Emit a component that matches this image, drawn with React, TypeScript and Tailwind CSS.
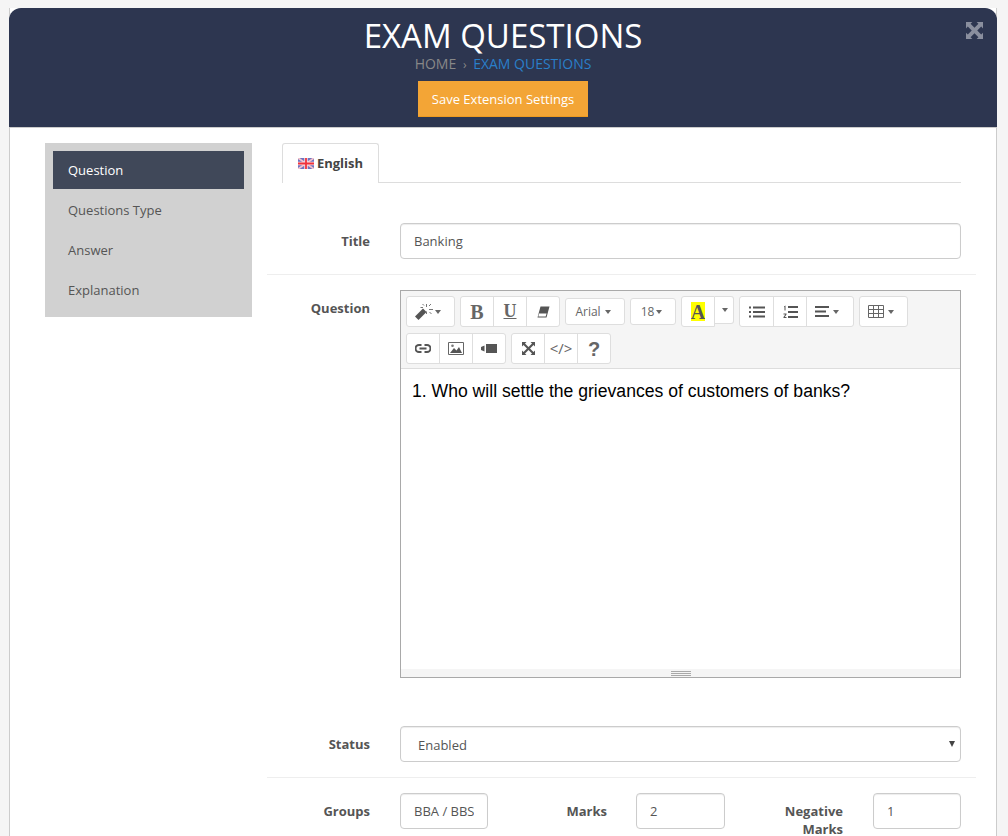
const inputClass =
  "h-[36px] rounded-[4px] border border-[#ccc] bg-white px-[13px] text-[13px] text-[#555] outline-none shadow-[inset_0_1px_1px_rgba(0,0,0,0.075)]";
const labelClass = "text-right text-[13px] font-bold leading-[18px] text-[#555]";
const btn = "flex items-center justify-center border-[#dedede] bg-white text-[#666]";

function Caret() {
  return <span className="ml-[4px] inline-block border-x-[3.5px] border-t-[4px] border-x-transparent border-t-[#666]" />;
}

function Wand() {
  return (
    <svg width="19" height="17" viewBox="0 0 19 17" fill="#555">
      <path d="M0 13.500L8 5.500L11.500 9L3.500 17Z" />
      <path d="M11.500 1v3M11.500 8.500v2.500M5.500 4.500h2.500M14 6.500h4M14 3l2-2M14.500 9l2 2M7.500 1l1.500 1.500" stroke="#777" strokeWidth="1" />
    </svg>
  );
}

function Eraser() {
  return (
    <svg width="13" height="12" viewBox="0 0 13 12" fill="#555">
      <path d="M3.500 0.500H12.500L9.500 11.500H0.500Z" />
      <path d="M2 7.500H9.600L8.700 10.500H1.300Z" fill="#fff" />
    </svg>
  );
}

function BulletList() {
  return (
    <svg width="16" height="12" viewBox="0 0 16 12" fill="#555">
      <rect x="0" y="0.500" width="2" height="2" />
      <rect x="0" y="5" width="2" height="2" />
      <rect x="0" y="9.500" width="2" height="2" />
      <rect x="4" y="0.500" width="12" height="2" />
      <rect x="4" y="5" width="12" height="2" />
      <rect x="4" y="9.500" width="12" height="2" />
    </svg>
  );
}

function NumberList() {
  return (
    <svg width="15" height="14" viewBox="0 0 15 14" fill="#555">
      <rect x="5" y="1" width="10" height="2" />
      <rect x="5" y="6" width="10" height="2" />
      <rect x="5" y="11" width="10" height="2" />
      <path d="M1 1.500L2.500 0.500V5.500H1.500V2L1 2.300Z" />
      <path d="M0.500 8.500H3.500V9.500L1.800 12H3.500V13H0.500V12L2.300 9.500H0.500Z" />
    </svg>
  );
}

function AlignLeft() {
  return (
    <svg width="14" height="11" viewBox="0 0 14 11" fill="#555">
      <rect x="0" y="0" width="14" height="2" />
      <rect x="0" y="4.500" width="11" height="2" />
      <rect x="0" y="9" width="14" height="2" />
    </svg>
  );
}

function TableIcon() {
  return (
    <svg width="16" height="13" viewBox="0 0 16 13" fill="none" stroke="#666" strokeWidth="1">
      <path d="M0.500 0.500H15.500V12.500H0.500ZM0.500 4.500H15.500M0.500 8.500H15.500M5.500 0.500V12.500M10.500 0.500V12.500" />
    </svg>
  );
}

function LinkIcon() {
  return (
    <svg width="16" height="9" viewBox="0 0 16 9" fill="none" stroke="#555" strokeWidth="2">
      <path d="M6.500 1H4a3.500 3.500 0 0 0 0 7h2.500M9.500 1H12a3.500 3.500 0 0 1 0 7H9.500M4.500 4.500h7" />
    </svg>
  );
}

function PictureIcon() {
  return (
    <svg width="16" height="13" viewBox="0 0 16 13">
      <path d="M0.500 0.500H15.500V12.500H0.500Z" fill="none" stroke="#666" />
      <path d="M2 11L6 6L8.500 8.500L11 5L14 11Z" fill="#555" />
      <circle cx="4.500" cy="3.800" r="1.300" fill="#777" />
    </svg>
  );
}

function VideoIcon() {
  return (
    <svg width="16" height="9" viewBox="0 0 16 9" fill="#555">
      <rect x="5" y="0" width="11" height="9" />
      <path d="M0 3L3.500 1.500V7.500L0 6Z" />
    </svg>
  );
}

function ExpandIcon({ size, color }: { size: number; color: string }) {
  return (
    <svg width={size} height={size} viewBox="0 0 16 16" fill={color}>
      <path d="M0 0H6L4.300 1.700L8 5.400L11.700 1.700L10 0H16V6L14.300 4.300L10.600 8L14.300 11.700L16 10V16H10L11.700 14.300L8 10.600L4.300 14.300L6 16H0V10L1.700 11.700L5.400 8L1.700 4.300L0 6Z" />
    </svg>
  );
}

// thinner variant used in the editor toolbar
function FullscreenIcon() {
  return (
    <svg width="13" height="13" viewBox="0 0 13 13" fill="#555">
      <path d="M0 0H4.500L3 1.500L6.500 5L10 1.500L8.500 0H13V4.500L11.500 3L8 6.500L11.500 10L13 8.500V13H8.500L10 11.500L6.500 8L3 11.500L4.500 13H0V8.500L1.500 10L5 6.500L1.500 3L0 4.500Z" />
    </svg>
  );
}

function Flag() {
  return (
    <svg width="16" height="11" viewBox="0 0 16 11" className="mr-[3px]">
      <rect width="16" height="11" fill="#6f72c0" />
      <path d="M0 0L16 11M16 0L0 11" stroke="#f3c4cc" strokeWidth="1.800" />
      <path d="M8 0V11M0 5.500H16" stroke="#f8dfe2" strokeWidth="3.500" />
      <path d="M8 0V11M0 5.500H16" stroke="#f0323c" strokeWidth="1.800" />
    </svg>
  );
}

function Toolbar() {
  return (
    <div className="flex h-[78px] flex-col gap-[6px] border-b border-[#ddd] bg-[#f5f5f5] pl-[5px] pt-[5px]">
      <div className="flex h-[31px] items-start gap-[5px]">
        <div className={`${btn} h-[31px] w-[49px] rounded-[3px] border pr-[6px]`}>
          <Wand />
          <span className="ml-px inline-block border-x-[3.5px] border-t-[4px] border-x-transparent border-t-[#666]" />
        </div>
        <div className="flex h-[31px] w-[100px] rounded-[3px] border border-[#dedede]">
          <div className={`${btn} flex-1 rounded-l-[3px] font-['Liberation_Serif',serif] text-[20px] font-bold`}>B</div>
          <div className={`${btn} flex-1 border-l font-['Liberation_Serif',serif] text-[18px] font-bold underline`}>U</div>
          <div className={`${btn} flex-1 rounded-r-[3px] border-l`}>
            <Eraser />
          </div>
        </div>
        <div className={`${btn} mt-[2px] h-[27px] w-[60px] rounded-[3px] border pr-[4px] text-[12px]`}>
          Arial
          <Caret />
        </div>
        <div className={`${btn} mt-[2px] h-[27px] w-[46px] rounded-[3px] border pr-[3px] text-[12px]`}>
          18
          <span className="ml-[2px] inline-block border-x-[3.5px] border-t-[4px] border-x-transparent border-t-[#666]" />
        </div>
        <div className="flex">
          <div className={`${btn} h-[31px] w-[34px] rounded-l-[3px] border`}>
            <span className="flex h-[19px] w-[14px] items-center justify-center overflow-hidden bg-[#ff0] font-['Liberation_Serif',serif] text-[20px] font-bold text-[#555]">A</span>
          </div>
          <div className={`${btn} h-[28px] w-[19px] rounded-r-[3px] border border-l-0 pr-[3px]`}>
            <Caret />
          </div>
        </div>
        <div className="flex h-[31px] w-[115px] rounded-[3px] border border-[#dedede]">
          <div className={`${btn} w-[33px] rounded-l-[3px]`}>
            <BulletList />
          </div>
          <div className={`${btn} w-[33px] border-l`}>
            <NumberList />
          </div>
          <div className={`${btn} flex-1 rounded-r-[3px] border-l pr-[7px]`}>
            <AlignLeft />
            <Caret />
          </div>
        </div>
        <div className={`${btn} h-[31px] w-[49px] rounded-[3px] border pr-[6px]`}>
          <TableIcon />
          <Caret />
        </div>
      </div>
      <div className="flex h-[31px] gap-[5px]">
        <div className="flex w-[100px] rounded-[3px] border border-[#dedede]">
          <div className={`${btn} flex-1 rounded-l-[3px]`}>
            <LinkIcon />
          </div>
          <div className={`${btn} flex-1 border-l`}>
            <PictureIcon />
          </div>
          <div className={`${btn} flex-1 rounded-r-[3px] border-l`}>
            <VideoIcon />
          </div>
        </div>
        <div className="flex w-[100px] rounded-[3px] border border-[#dedede]">
          <div className={`${btn} flex-1 rounded-l-[3px]`}>
            <FullscreenIcon />
          </div>
          <div className={`${btn} flex-1 border-l text-[15px] text-[#555]`}>&lt;/&gt;</div>
          <div className={`${btn} flex-1 rounded-r-[3px] border-l font-['Liberation_Sans',sans-serif] text-[20px] font-bold`}>?</div>
        </div>
      </div>
    </div>
  );
}

export default function App() {
  return (
    <div className="h-screen overflow-hidden bg-[#f5f5f5] pl-[9px] pt-[8px] font-['Open_Sans',sans-serif]">
      <div className="h-full w-[988px] border-x border-[#ccc] bg-white">
        <header className="relative -mx-px flex h-[120px] flex-col items-center rounded-t-[12px] border-b border-[#ccc] bg-[#2d3650]">
          <h1 className="mt-[9px] text-[33px] leading-[37px] text-white">EXAM QUESTIONS</h1>
          <div className="text-[14px] leading-[20px] text-[#888]">
            HOME <span className="mx-[3px] text-[12px]">›</span> <span className="text-[#2a7fc9]">EXAM QUESTIONS</span>
          </div>
          <button className="mt-[6px] h-[36px] w-[170px] border-b border-[#ee9a1f] bg-[#f3a536] pt-[2px] text-[13px] text-white">
            Save Extension Settings
          </button>
          <div className="absolute right-[14px] top-[14px]">
            <ExpandIcon size={17} color="#8a8f9e" />
          </div>
        </header>

        <div className="flex pt-[15px]">
          <aside className="ml-[35px] h-[174px] w-[207px] bg-[#d1d1d1] p-[8px] text-[13px] text-[#555]">
            <div className="flex h-[38px] items-center bg-[#404859] pl-[15px] pt-[2px] text-white">Question</div>
            <div className="flex h-[40px] items-center pl-[15px] pt-[4px]">Questions Type</div>
            <div className="flex h-[40px] items-center pl-[15px] pt-[4px]">Answer</div>
            <div className="flex h-[40px] items-center pl-[15px] pt-[4px]">Explanation</div>
          </aside>

          <main className="ml-[15px] w-[709px]">
            <div className="mx-[15px] flex h-[40px] border-b border-[#ddd]">
              <div className="flex h-[40px] w-[97px] items-center justify-center rounded-t-[3px] border-x border-t border-[#ddd] bg-white text-[13px] font-bold text-[#444]">
                <Flag />
                English
              </div>
            </div>

            <div className="mt-[40px] flex items-center gap-[30px] border-b border-[#eee] pb-[15px]">
              <label className={`${labelClass} w-[103px]`}>Title</label>
              <input readOnly value="Banking" className={`${inputClass} w-[561px]`} />
            </div>

            <div className="mt-[15px] flex gap-[30px]">
              <label className={`${labelClass} w-[103px] pt-[9px]`}>Question</label>
              <div className="flex h-[388px] w-[561px] flex-col border border-[#a9a9a9]">
                <Toolbar />
                <div className="flex-1 pl-[11px] pt-[10px] font-['Liberation_Sans',sans-serif] text-[17.6px] leading-[24px] text-black">
                  1. Who will settle the grievances of customers of banks?
                </div>
                <div className="flex h-[8px] flex-col items-center justify-center gap-px bg-[#f5f5f5]">
                  <span className="h-px w-[20px] bg-[#a9a9a9]" />
                  <span className="h-px w-[20px] bg-[#a9a9a9]" />
                  <span className="h-px w-[20px] bg-[#a9a9a9]" />
                </div>
              </div>
            </div>

            <div className="mt-[48px] flex items-center gap-[30px] border-b border-[#eee] pb-[15px]">
              <label className={`${labelClass} w-[103px]`}>Status</label>
              <div className={`${inputClass} flex w-[561px] items-center justify-between !pl-[17px] !pr-[5px]`}>
                <span className="pt-[3px]">Enabled</span>
                <span className="border-x-[3.5px] border-t-[6px] border-x-transparent border-t-[#444]" />
              </div>
            </div>

            <div className="mt-[15px] flex items-start">
              <label className={`${labelClass} w-[103px] pt-[9px]`}>Groups</label>
              <input readOnly value="BBA / BBS" className={`${inputClass} ml-[30px] w-[88px]`} />
              <label className={`${labelClass} w-[119px] pt-[9px]`}>Marks</label>
              <input readOnly value="2" className={`${inputClass} ml-[29px] w-[89px]`} />
              <label className={`${labelClass} w-[118px] pt-[9px]`}>
                Negative
                <br />
                Marks
              </label>
              <input readOnly value="1" className={`${inputClass} ml-[30px] w-[88px]`} />
            </div>
          </main>
        </div>
      </div>
    </div>
  );
}
